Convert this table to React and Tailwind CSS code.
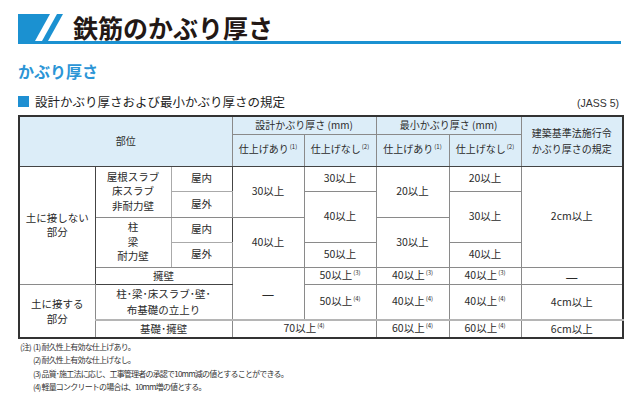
import React from 'react';

const Sup = ({ n }) => (
  <span className="text-[6px] relative top-[-4px] ml-[1px]">({n})</span>
);

const td = "border border-[#8a8a8a] text-center align-middle p-0";

const App = () => {
  return (
    <div
      className="w-[640px] h-[401px] bg-white text-[#2a2a2a] overflow-hidden"
      style={{ fontFamily: '"Noto Sans CJK JP", "Noto Sans", sans-serif' }}
    >
      {/* page title */}
      <div className="pt-[14px] pl-[18px] pr-[19px]">
        <div className="flex items-end h-[27px]">
          <svg width="46" height="27" viewBox="0 0 46 27" className="block shrink-0">
            <polygon points="0,0 32,0 17,27 0,27" fill="#1b91d1" />
            <polygon points="39,0 45,0 30,27 24,27" fill="#1b91d1" />
          </svg>
          <h1 className="ml-[9px] text-[25px] leading-[27px] font-bold text-[#231815]">
            鉄筋のかぶり厚さ
          </h1>
        </div>
        <div className="h-[3px] bg-[#1b91d1]" />
      </div>

      {/* sub title */}
      <div className="px-[18px] mt-[17px]">
        <h2 className="text-[16px] leading-[20px] font-bold text-[#2b95d6]">かぶり厚さ</h2>
        <div className="flex items-end justify-between mt-[13px] pr-[3px]">
          <div className="flex items-center text-[12.5px] leading-[15px] text-[#222]">
            <span className="w-[11px] h-[11px] bg-[#1e8fd2] mr-[6px]" />
            設計かぶり厚さおよび最小かぶり厚さの規定
          </div>
          <div className="text-[10.5px] leading-[12px] text-[#333]" style={{ fontFamily: '"Liberation Sans", sans-serif' }}>
            (JASS 5)
          </div>
        </div>
      </div>

      {/* table */}
      <div className="px-[18px] mt-[6px]">
        <table className="table-fixed border-collapse w-[604px] border-2 border-[#333] text-[10.5px] leading-[14.5px]">
          <colgroup>
            <col className="w-[76px]" />
            <col className="w-[76px]" />
            <col className="w-[61px]" />
            <col className="w-[72px]" />
            <col className="w-[72px]" />
            <col className="w-[73px]" />
            <col className="w-[72px]" />
            <col className="w-[102px]" />
          </colgroup>
          <thead className="bg-[#dcedf8] text-[10px]">
            <tr className="h-[18px]">
              <th colSpan={3} rowSpan={2} className={`${td} font-normal border-b-[#444]`}>部位</th>
              <th colSpan={2} className={`${td} font-normal`}>設計かぶり厚さ (mm)</th>
              <th colSpan={2} className={`${td} font-normal`}>最小かぶり厚さ (mm)</th>
              <th rowSpan={2} className={`${td} font-normal border-b-[#444] leading-[16px]`}>
                建築基準法施行令<br />かぶり厚さの規定
              </th>
            </tr>
            <tr className="h-[32px]">
              <th className={`${td} font-normal border-b-[#444]`}>仕上げあり<Sup n={1} /></th>
              <th className={`${td} font-normal border-b-[#444]`}>仕上げなし<Sup n={2} /></th>
              <th className={`${td} font-normal border-b-[#444]`}>仕上げあり<Sup n={1} /></th>
              <th className={`${td} font-normal border-b-[#444]`}>仕上げなし<Sup n={2} /></th>
            </tr>
          </thead>
          <tbody>
            <tr className="h-[25px]">
              <td rowSpan={5} className={`${td} border-r-[#444]`}>土に接しない<br />部分</td>
              <td rowSpan={2} className={`${td} border-r-[#aaa]`}>屋根スラブ<br />床スラブ<br />非耐力壁</td>
              <td className={`${td} border-[#aaa] border-r-[#444]`}>屋内</td>
              <td rowSpan={2} className={td}>30以上</td>
              <td className={td}>30以上</td>
              <td rowSpan={2} className={td}>20以上</td>
              <td className={td}>20以上</td>
              <td rowSpan={4} className={td}>2cm以上</td>
            </tr>
            <tr className="h-[26px]">
              <td className={`${td} border-l-[#aaa] border-r-[#444]`}>屋外</td>
              <td rowSpan={2} className={td}>40以上</td>
              <td rowSpan={2} className={td}>30以上</td>
            </tr>
            <tr className="h-[25px]">
              <td rowSpan={2} className={`${td} border-r-[#aaa]`}>柱<br />梁<br />耐力壁</td>
              <td className={`${td} border-[#aaa] border-r-[#444]`}>屋内</td>
              <td rowSpan={2} className={td}>40以上</td>
              <td rowSpan={2} className={td}>30以上</td>
            </tr>
            <tr className="h-[25px]">
              <td className={`${td} border-l-[#aaa] border-r-[#444]`}>屋外</td>
              <td className={td}>50以上</td>
              <td className={td}>40以上</td>
            </tr>
            <tr className="h-[16px]">
              <td colSpan={2} className={`${td} leading-[14px] border-b-[#444]`}>擁壁</td>
              <td rowSpan={2} className={`${td} text-[14px]`}>—</td>
              <td className={`${td} leading-[14px]`}>50以上<Sup n={3} /></td>
              <td className={`${td} leading-[14px]`}>40以上<Sup n={3} /></td>
              <td className={`${td} leading-[14px]`}>40以上<Sup n={3} /></td>
              <td className={`${td} leading-[14px] text-[14px]`}>—</td>
            </tr>
            <tr className="h-[36px]">
              <td rowSpan={2} className={`${td} leading-[15px] border-t-[#444]`}>土に接する<br />部分</td>
              <td colSpan={2} className={`${td} leading-[16px]`}>柱･梁･床スラブ･壁･<br />布基礎の立上り</td>
              <td className={td}>50以上<Sup n={4} /></td>
              <td className={td}>40以上<Sup n={4} /></td>
              <td className={td}>40以上<Sup n={4} /></td>
              <td className={td}>4cm以上</td>
            </tr>
            <tr className="h-[16px]">
              <td colSpan={2} className={`${td} border-t-2 border-t-[#b5b5b5] leading-[14px]`}>基礎･擁壁</td>
              <td colSpan={2} className={`${td} border-t-2 border-t-[#b5b5b5] leading-[14px]`}>70以上<Sup n={4} /></td>
              <td className={`${td} border-t-2 border-t-[#b5b5b5] leading-[14px]`}>60以上<Sup n={4} /></td>
              <td className={`${td} border-t-2 border-t-[#b5b5b5] leading-[14px]`}>60以上<Sup n={4} /></td>
              <td className={`${td} border-t-2 border-t-[#b5b5b5] leading-[14px]`}>6cm以上</td>
            </tr>
          </tbody>
        </table>
      </div>

      {/* notes */}
      <div className="pl-[20px] mt-[1px] text-[8px] leading-[13.3px] tracking-[-0.8px] text-[#333]">
        <div>(注)&nbsp; (1) 耐久性上有効な仕上げあり。</div>
        <div className="pl-[13px]">(2) 耐久性上有効な仕上げなし。</div>
        <div className="pl-[13px]">(3) 品質･施工法に応じ、工事管理者の承認で10mm減の値とすることができる。</div>
        <div className="pl-[13px]">(4) 軽量コンクリートの場合は、10mm増の値とする。</div>
      </div>
    </div>
  );
};

export default App;
